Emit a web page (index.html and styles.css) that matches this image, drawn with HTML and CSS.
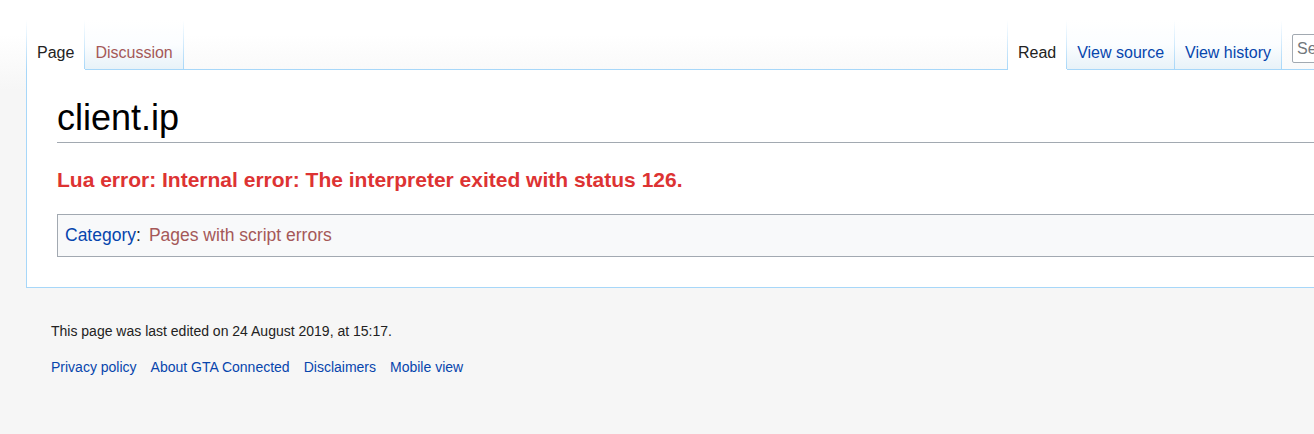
FILE: index.html
```html
<!DOCTYPE html>
<html lang="en">
<head>
<meta charset="utf-8">
<title>client.ip - GTA Connected</title>
<link rel="stylesheet" href="styles.css">
</head>
<body>
<div class="page">
  <header class="head">
    <nav class="tabs">
      <a class="tab selected" href="#">Page</a>
      <a class="tab new" href="#">Discussion</a>
    </nav>
    <nav class="tabs tabs-right">
      <a class="tab selected" href="#">Read</a>
      <a class="tab" href="#">View source</a>
      <a class="tab" href="#">View history</a>
    </nav>
    <div class="search">
      <input class="search-input" type="search" placeholder="Search GTA Connected">
    </div>
  </header>

  <main class="content">
    <h1 class="title">client.ip</h1>
    <div class="body-content">
      <p class="error-line"><strong class="error">Lua error: Internal error: The interpreter exited with status 126.</strong></p>
      <div class="catlinks">
        <a class="cat-label" href="#">Category</a><span class="colon">:</span>
        <a class="cat-item new" href="#">Pages with script errors</a>
      </div>
    </div>
  </main>

  <footer class="footer">
    <p class="lastmod">This page was last edited on 24 August 2019, at 15:17.</p>
    <ul class="footer-links">
      <li><a href="#">Privacy policy</a></li>
      <li><a href="#">About GTA Connected</a></li>
      <li><a href="#">Disclaimers</a></li>
      <li><a href="#">Mobile view</a></li>
    </ul>
  </footer>
</div>
</body>
</html>
```

FILE: styles.css
```css
html, body {
  margin: 0;
  padding: 0;
}

body {
  overflow: hidden;
  font-family: "Liberation Sans", Arial, sans-serif;
  color: #222;
  background-color: #f6f6f6;
  background-image: linear-gradient(to bottom, #ffffff 35px, #f6f6f6 90px);
  background-size: 100% 100px;
  background-repeat: no-repeat;
}

a {
  color: #0645ad;
  text-decoration: none;
}

a.new {
  color: #a55858;
}

.page {
  width: 1500px;
}

/* ---------- header / tabs ---------- */
.head {
  display: flex;
  align-items: flex-end;
  height: 70px;
  box-sizing: border-box;
  margin-left: 26px;
  border-bottom: 1px solid #a7d7f9;
}

.tabs {
  display: flex;
  height: 50px;
  margin-bottom: -1px;
  padding-left: 1px;
  background-image: linear-gradient(to bottom, rgba(167, 215, 249, 0), #a7d7f9);
  background-size: 1px 100%;
  background-position: left top;
  background-repeat: no-repeat;
}

.tabs-right {
  margin-left: auto;
}

.tab {
  display: flex;
  align-items: flex-end;
  box-sizing: border-box;
  height: 50px;
  padding: 0 11px 6px 10px;
  font-size: 16px;
  line-height: 20px;
  border-bottom: 1px solid #a7d7f9;
  background-image:
    linear-gradient(to bottom, rgba(167, 215, 249, 0), #a7d7f9),
    linear-gradient(to bottom, #ffffff 0%, #fbfdff 50%, #e8f2f8 100%);
  background-size: 1px 100%, 100% 100%;
  background-position: right top, left top;
  background-repeat: no-repeat;
}

.tab.selected {
  color: #222;
  border-bottom-color: #ffffff;
  background-image:
    linear-gradient(to bottom, rgba(167, 215, 249, 0), #a7d7f9),
    linear-gradient(#ffffff, #ffffff);
}

.search {
  align-self: flex-start;
  margin: 34px 0 0 10px;
}

.search-input {
  display: block;
  box-sizing: border-box;
  width: 208px;
  height: 29px;
  margin: 0;
  padding: 0 4px;
  border: 1px solid #a2a9b1;
  border-radius: 2px;
  background: #fff;
  font-family: "Liberation Sans", Arial, sans-serif;
  font-size: 16px;
  color: #222;
  -webkit-appearance: none;
  appearance: none;
}

.search-input::placeholder {
  color: #72777d;
}

/* ---------- content ---------- */
.content {
  display: block;
  margin-left: 26px;
  padding: 25px 30px 30px 30px;
  background: #ffffff;
  border-left: 1px solid #a7d7f9;
  border-bottom: 1px solid #a7d7f9;
}

.title {
  margin: 0;
  padding: 0;
  font-size: 36px;
  font-weight: normal;
  line-height: 1.3;
  color: #000;
  border-bottom: 1px solid #a2a9b1;
}

.body-content {
  font-size: 17.5px;
}

.error-line {
  margin: 23px 0 0 0;
  font-size: 21px;
  line-height: 28px;
}

.error {
  color: #dd3333;
  font-weight: bold;
}

.catlinks {
  margin-top: 20px;
  padding: 6px 7px;
  border: 1px solid #a2a9b1;
  background: #f8f9fa;
  line-height: 29px;
  display: flex;
  align-items: baseline;
}

.colon {
  color: #222;
  margin-right: 8px;
}

/* ---------- footer ---------- */
.footer {
  margin-left: 26px;
  padding: 33px 25px 20px 25px;
  font-size: 14px;
  line-height: 20px;
  color: #222;
}

.lastmod {
  margin: 0;
}

.footer-links {
  display: flex;
  gap: 14px;
  list-style: none;
  margin: 16px 0 0 0;
  padding: 0;
}
```
